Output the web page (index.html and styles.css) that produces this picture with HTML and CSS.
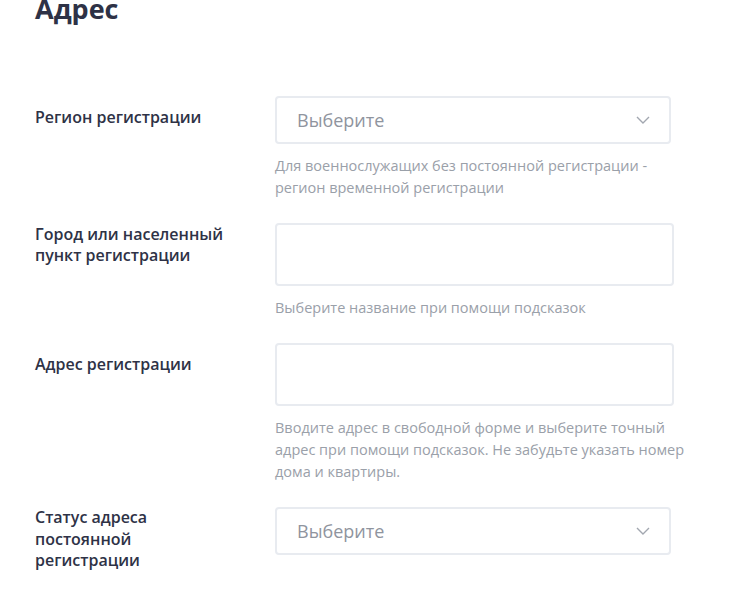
FILE: index.html
```html
<!DOCTYPE html>
<html lang="ru">
<head>
<meta charset="utf-8">
<title>Адрес</title>
<link rel="stylesheet" href="styles.css">
</head>
<body>
<div class="page">
  <h1 class="title">Адрес</h1>
  <div class="form">
    <div class="row">
      <div class="label-cell"><span class="label">Регион регистрации</span></div>
      <div class="field">
        <div class="select">
          <span class="placeholder">Выберите</span>
          <svg class="chevron" width="14" height="8" viewBox="0 0 14 8"><polyline points="1,1 7,7 13,1" fill="none" stroke="#a2a7b0" stroke-width="1.4"/></svg>
        </div>
        <p class="hint">Для военнослужащих без постоянной регистрации - регион временной регистрации</p>
      </div>
    </div>
    <div class="row">
      <div class="label-cell"><span class="label">Город или населенный пункт регистрации</span></div>
      <div class="field">
        <div class="input"></div>
        <p class="hint">Выберите название при помощи подсказок</p>
      </div>
    </div>
    <div class="row">
      <div class="label-cell"><span class="label">Адрес регистрации</span></div>
      <div class="field">
        <div class="input"></div>
        <p class="hint">Вводите адрес в свободной форме и выберите точный адрес при помощи подсказок. Не забудьте указать номер дома и квартиры.</p>
      </div>
    </div>
    <div class="row">
      <div class="label-cell"><span class="label">Статус адреса постоянной регистрации</span></div>
      <div class="field">
        <div class="select">
          <span class="placeholder">Выберите</span>
          <svg class="chevron" width="14" height="8" viewBox="0 0 14 8"><polyline points="1,1 7,7 13,1" fill="none" stroke="#a2a7b0" stroke-width="1.4"/></svg>
        </div>
      </div>
    </div>
  </div>
</div>
</body>
</html>
```

FILE: styles.css
```css
* { box-sizing: border-box; }

html, body {
  margin: 0;
  padding: 0;
  background: #ffffff;
}

body {
  font-family: "Open Sans", "Noto Sans", "Liberation Sans", sans-serif;
  color: #2e3246;
}

.page {
  padding: 0 0 0 35px;
}

.title {
  margin: -8px 0 0 0;
  font-size: 27px;
  line-height: 34px;
  font-weight: 700;
  color: #2e3246;
}

.form {
  margin-top: 70px;
  display: flex;
  flex-direction: column;
  gap: 24px;
}

.row {
  display: grid;
  grid-template-columns: 240px 420px;
  align-items: start;
}

.label-cell {
  min-height: 44px;
  display: flex;
  align-items: center;
}

.label {
  display: block;
  max-width: 200px;
  font-size: 16px;
  line-height: 21.5px;
  font-weight: 600;
  color: #2e3246;
}

.field {
  display: flex;
  flex-direction: column;
}

.select {
  width: 396px;
  height: 48px;
  border: 2px solid #e8ebf0;
  border-radius: 4px;
  display: flex;
  align-items: center;
  justify-content: space-between;
  padding: 0 19px 0 20px;
  background: #fff;
}

.placeholder {
  font-size: 18px;
  color: #8f949e;
}

.chevron {
  display: block;
}

.input {
  width: 399px;
  height: 63px;
  border: 2px solid #e8ebf0;
  border-radius: 4px;
  background: #fff;
}

.hint {
  width: 415px;
  margin: 11px 0 0 0;
  font-size: 14.5px;
  line-height: 22px;
  color: #9aa0a9;
}
```
